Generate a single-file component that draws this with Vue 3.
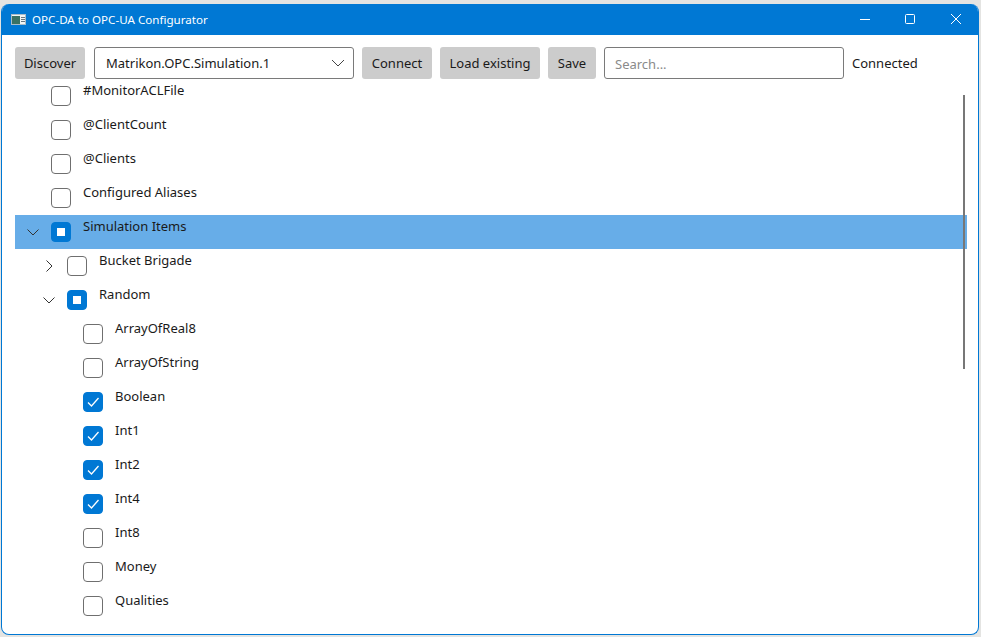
<template>
  <div class="desktop">
    <main class="window">
      <header class="titlebar">
        <svg class="app-icon" width="15" height="11" viewBox="0 0 15 11">
          <rect x="0.5" y="0.5" width="14" height="10" fill="#f2f5f4" stroke="#a9bcc8" />
          <rect x="1" y="2" width="8" height="8" fill="#3a7263" />
          <rect x="10" y="3" width="4" height="1" fill="#6a7880" />
          <rect x="10" y="5" width="4" height="1" fill="#6a7880" />
          <rect x="10" y="7" width="4" height="1" fill="#6a7880" />
        </svg>
        <span class="title">OPC-DA to OPC-UA Configurator</span>
        <div class="caption-buttons">
          <svg width="12" height="12" viewBox="0 0 12 12" stroke="#fff" fill="none">
            <path d="M2 6.5h10" />
          </svg>
          <svg width="12" height="12" viewBox="0 0 12 12" stroke="#fff" fill="none">
            <rect x="1.5" y="1.5" width="9" height="9" rx="1" />
          </svg>
          <svg width="12" height="12" viewBox="0 0 12 12" stroke="#fff" fill="none">
            <path d="M1 1l10 10M11 1L1 11" />
          </svg>
        </div>
      </header>

      <div class="toolbar">
        <button class="btn discover">Discover</button>
        <div class="combo">
          <span>Matrikon.OPC.Simulation.1</span>
          <svg width="14" height="8" viewBox="0 0 14 8" fill="none" stroke="#444">
            <path d="M1 1l6 6 6-6" />
          </svg>
        </div>
        <button class="btn connect">Connect</button>
        <button class="btn load">Load existing</button>
        <button class="btn save">Save</button>
        <input class="search" type="text" placeholder="Search..." />
        <span class="status">Connected</span>
      </div>

      <div class="tree">
        <div
          v-for="item in items"
          :key="item.label"
          class="row"
          :class="[`level-${item.level}`, { selected: item.selected }]"
        >
          <span class="expander">
            <svg v-if="item.expander === 'open'" width="12" height="7" viewBox="0 0 12 7" fill="none" stroke="#333">
              <path d="M0.5 0.5l5.5 5.5 5.5-5.5" />
            </svg>
            <svg v-else-if="item.expander === 'closed'" width="7" height="12" viewBox="0 0 7 12" fill="none" stroke="#333">
              <path d="M0.5 0.5l5.5 5.5-5.5 5.5" />
            </svg>
          </span>
          <span class="check" :class="item.state">
            <svg v-if="item.state === 'checked'" width="12" height="10" viewBox="0 0 12 10" fill="none" stroke="#fff" stroke-width="1.3">
              <path d="M1 5.5l3.5 3.5 7-8" />
            </svg>
            <span v-else-if="item.state === 'mixed'" class="dot"></span>
          </span>
          <span class="label">{{ item.label }}</span>
        </div>
        <div class="scroll-thumb"></div>
      </div>
    </main>
  </div>
</template>

<script setup>
const items = [
  { label: '#MonitorACLFile', level: 0 },
  { label: '@ClientCount', level: 0 },
  { label: '@Clients', level: 0 },
  { label: 'Configured Aliases', level: 0 },
  { label: 'Simulation Items', level: 0, expander: 'open', state: 'mixed', selected: true },
  { label: 'Bucket Brigade', level: 1, expander: 'closed' },
  { label: 'Random', level: 1, expander: 'open', state: 'mixed' },
  { label: 'ArrayOfReal8', level: 2 },
  { label: 'ArrayOfString', level: 2 },
  { label: 'Boolean', level: 2, state: 'checked' },
  { label: 'Int1', level: 2, state: 'checked' },
  { label: 'Int2', level: 2, state: 'checked' },
  { label: 'Int4', level: 2, state: 'checked' },
  { label: 'Int8', level: 2 },
  { label: 'Money', level: 2 },
  { label: 'Qualities', level: 2 }
]
</script>

<style>
html,
body {
  margin: 0;
  background: #e4e4e2;
}
</style>

<style scoped>
.desktop {
  width: 981px;
  height: 637px;
  padding: 4px 2px 2px 1px;
  box-sizing: border-box;
  overflow: hidden;
  font-family: 'Noto Sans', 'Open Sans', sans-serif;
  font-size: 13px;
  color: #1a1a1a;
}

.window {
  height: 100%;
  display: flex;
  flex-direction: column;
  background: #fff;
  border: 1px solid #0078d4;
  border-top: none;
  border-radius: 8px;
  box-sizing: border-box;
  overflow: hidden;
}

.titlebar {
  height: 31px;
  flex-shrink: 0;
  display: flex;
  align-items: center;
  padding-left: 9px;
  background: #0078d4;
  color: #fff;
  font-size: 11.6px;
}

.app-icon {
  margin-right: 6px;
}

.caption-buttons {
  margin-left: auto;
  margin-top: -1px;
  display: flex;
  gap: 34px;
  padding-right: 16px;
}

.toolbar {
  height: 32px;
  flex-shrink: 0;
  margin-top: 12px;
  padding-left: 13px;
  display: flex;
  gap: 8px;
}

.btn {
  height: 32px;
  padding: 0;
  border: none;
  border-radius: 3px;
  background: #cccccc;
  color: #1a1a1a;
  font: inherit;
}

.discover {
  width: 70px;
  margin-right: 1px;
}

.connect {
  width: 70px;
}

.load {
  width: 100px;
}

.save {
  width: 48px;
}

.combo {
  width: 260px;
  box-sizing: border-box;
  display: flex;
  align-items: center;
  justify-content: space-between;
  padding: 0 8px 0 11px;
  border: 1px solid #7a7a7a;
  border-radius: 3px;
}

.search {
  width: 240px;
  height: 32px;
  box-sizing: border-box;
  padding: 2px 10px 0;
  border: 1px solid #7a7a7a;
  border-radius: 3px;
  font: inherit;
  outline: none;
}

.search::placeholder {
  color: #8a8a8a;
}

.status {
  line-height: 32px;
}

.tree {
  position: relative;
  flex: 1;
  overflow: hidden;
}

.row {
  height: 34px;
  width: 952px;
  margin-left: 13px;
  box-sizing: border-box;
  position: relative;
  display: flex;
  align-items: center;
}

.row.selected {
  background: #67ade8;
}

.level-0 {
  padding-left: 10px;
}

.level-1 {
  padding-left: 26px;
}

.level-2 {
  padding-left: 42px;
}

.expander {
  width: 16px;
  margin-right: 10px;
  display: flex;
  justify-content: center;
}

.check {
  width: 20px;
  height: 20px;
  box-sizing: border-box;
  display: flex;
  align-items: center;
  justify-content: center;
  border: 1px solid #6f6f6f;
  border-radius: 4px;
  background: #fff;
}

.check.checked,
.check.mixed {
  background: #0078d4;
  border-color: #0078d4;
}

.dot {
  width: 8px;
  height: 8px;
  background: #fff;
}

.label {
  margin-left: 12px;
  margin-top: -12px;
  white-space: nowrap;
}

.scroll-thumb {
  position: absolute;
  top: 16px;
  left: 961px;
  width: 2px;
  height: 274px;
  background: #777;
}
</style>
